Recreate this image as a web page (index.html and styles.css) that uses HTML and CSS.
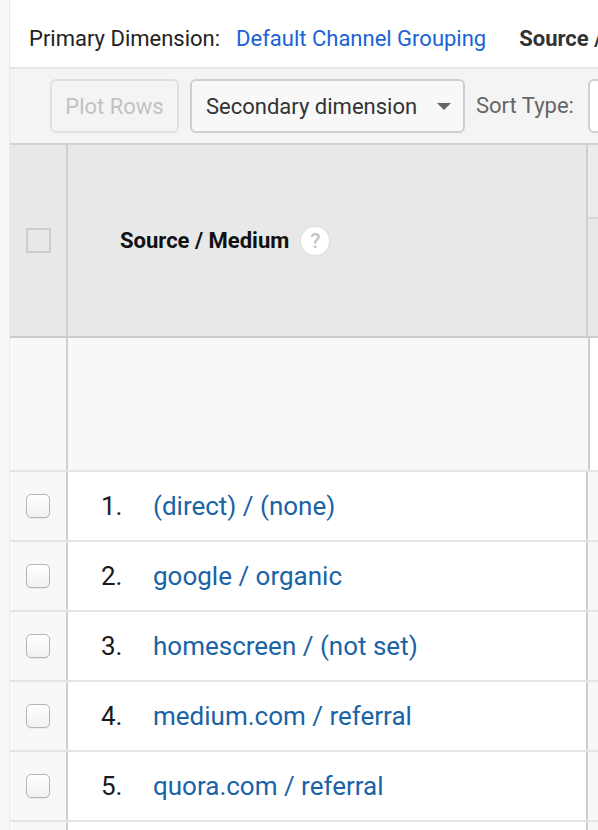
FILE: index.html
```html
<!DOCTYPE html>
<html>
<head>
<meta charset="utf-8">
<link rel="stylesheet" href="styles.css">
</head>
<body>
<div class="page">
  <div class="main">
    <div class="topbar">
      <span class="label">Primary Dimension:</span>
      <span class="link">Default Channel Grouping</span>
      <span class="current">Source / Medium</span>
    </div>
    <div class="toolbar">
      <div class="btn-plot">Plot Rows</div>
      <div class="select">Secondary dimension<span class="caret"></span></div>
      <span class="sort-label">Sort Type:</span>
      <div class="sort-select"></div>
    </div>
    <div class="table">
      <div class="row head">
        <div class="c1"><span class="box-square"></span></div>
        <div class="c2"><span class="head-title">Source / Medium</span><span class="help">?</span></div>
        <div class="c3"><div class="c3-top"></div></div>
      </div>
      <div class="row sub">
        <div class="c1"></div>
        <div class="c2"></div>
        <div class="c3"></div>
      </div>
      <div class="row data">
        <div class="c1"><span class="cb"></span></div>
        <div class="c2"><span class="num">1.</span><span class="src">(direct) / (none)</span></div>
        <div class="c3"></div>
      </div>
      <div class="row data">
        <div class="c1"><span class="cb"></span></div>
        <div class="c2"><span class="num">2.</span><span class="src">google / organic</span></div>
        <div class="c3"></div>
      </div>
      <div class="row data">
        <div class="c1"><span class="cb"></span></div>
        <div class="c2"><span class="num">3.</span><span class="src">homescreen / (not set)</span></div>
        <div class="c3"></div>
      </div>
      <div class="row data">
        <div class="c1"><span class="cb"></span></div>
        <div class="c2"><span class="num">4.</span><span class="src">medium.com / referral</span></div>
        <div class="c3"></div>
      </div>
      <div class="row data">
        <div class="c1"><span class="cb"></span></div>
        <div class="c2"><span class="num">5.</span><span class="src">quora.com / referral</span></div>
        <div class="c3"></div>
      </div>
      <div class="row data">
        <div class="c1"></div>
        <div class="c2"></div>
        <div class="c3"></div>
      </div>
    </div>
  </div>
</div>
</body>
</html>
```
FILE: styles.css
```css
html, body {
  margin: 0;
  padding: 0;
  overflow: hidden;
}
body {
  font-family: Roboto, "Liberation Sans", sans-serif;
  background: #f7f8fa;
}
.page {
  display: flex;
  height: 830px;
  padding-left: 9px;
  background: #f7f8fa;
}
.main {
  flex: 1;
  min-width: 0;
  background: #fff;
  border-left: 1px solid #e8eaed;
  overflow: hidden;
}
.topbar {
  height: 69px;
  box-sizing: border-box;
  padding: 26px 0 0 19px;
  border-bottom: 2px solid #e6e6e6;
  display: flex;
  white-space: nowrap;
  font-size: 22px;
  line-height: 26px;
}
.label { color: #222; }
.link { color: #1a62d5; margin-left: 16px; }
.current { color: #333; font-weight: 700; margin-left: 33px; }

.toolbar {
  height: 74px;
  box-sizing: border-box;
  background: #f4f4f4;
  display: flex;
  align-items: flex-start;
  padding: 10px 0 0 40px;
  white-space: nowrap;
  font-size: 22px;
}
.btn-plot {
  flex: none;
  width: 129px;
  height: 54px;
  box-sizing: border-box;
  border: 2px solid #e0e0e0;
  border-radius: 6px;
  color: #c2c2c2;
  display: flex;
  align-items: center;
  justify-content: center;
}
.select {
  flex: none;
  margin-left: 11px;
  width: 275px;
  height: 54px;
  box-sizing: border-box;
  border: 2px solid #cfcfcf;
  border-radius: 6px;
  background: #f8f8f8;
  color: #333;
  display: flex;
  align-items: center;
  padding-left: 14px;
}
.caret {
  margin-left: 20px;
  width: 0;
  height: 0;
  border-left: 7px solid transparent;
  border-right: 7px solid transparent;
  border-top: 7px solid #666;
}
.sort-label {
  margin-left: 11px;
  color: #666;
  line-height: 54px;
}
.sort-select {
  flex: none;
  margin-left: 14px;
  width: 120px;
  height: 54px;
  box-sizing: border-box;
  border: 2px solid #cfcfcf;
  border-radius: 6px;
  background: #fff;
}

.table {
  border-top: 2px solid #d2d2d2;
}
.row {
  display: flex;
}
.c1 {
  flex: none;
  width: 56px;
  border-right: 2px solid #cfcfcf;
  display: flex;
  align-items: center;
  justify-content: center;
}
.c2 {
  flex: none;
  width: 520px;
  border-right: 2px solid #cfcfcf;
  display: flex;
  align-items: center;
  white-space: nowrap;
}
.c3 {
  flex: 1;
}

.head {
  height: 191px;
  background: #e8e8e8;
  border-bottom: 2px solid #cccccc;
}
.head .c3 { background: #e8e8e8; }
.c3-top {
  height: 72px;
  border-bottom: 2px solid #d6d6d6;
  background: #ececec;
}
.box-square {
  width: 25px;
  height: 25px;
  box-sizing: border-box;
  border: 2px solid #cdcdcd;
}
.head .c2 { padding-left: 52px; box-sizing: border-box; }
.head-title {
  font-size: 22px;
  font-weight: 700;
  color: #111;
}
.help {
  margin-left: 12px;
  width: 28px;
  height: 28px;
  border-radius: 50%;
  background: #fff;
  box-shadow: 0 0 2px 1px #dedede;
  color: #c4c4c4;
  font-size: 21px;
  font-weight: 500;
  line-height: 28px;
  display: flex;
  align-items: center;
  justify-content: center;
}

.sub {
  height: 132px;
  border-bottom: 2px solid #e4e4e4;
}
.sub .c1, .sub .c2 { background: #f8f8f8; }
.sub .c3 { background: #fff; }

.data {
  height: 68px;
  border-bottom: 2px solid #e4e4e4;
}
.data .c1 { background: #f8f8f8; }
.data .c2 { background: #fff; padding-left: 33px; box-sizing: border-box; }
.data .c3 { background: #f8f8f8; }
.cb {
  width: 24px;
  height: 24px;
  box-sizing: border-box;
  border: 1px solid #b5b5b5;
  border-radius: 5px;
  background: linear-gradient(#ffffff, #f1f1f1);
  box-shadow: 0 1px 1px rgba(0,0,0,0.06);
}
.num {
  width: 52px;
  font-size: 26px;
  color: #1b1b1b;
}
.src {
  font-size: 26px;
  color: #1a63a6;
}
```
